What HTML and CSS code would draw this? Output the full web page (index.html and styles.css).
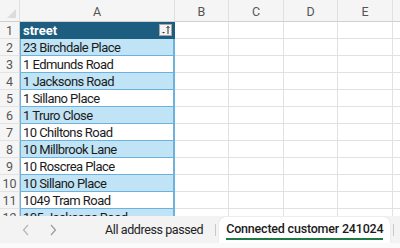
FILE: index.html
```html
<!DOCTYPE html>
<html lang="en">
<head>
    <meta charset="UTF-8">
    <title>street</title>
    <link rel="stylesheet" href="styles.css">
</head>
<body>
    <div class="sheet">
        <div class="grid">
            <div class="hd corner"><span class="tri"></span></div>
            <div class="hd">A</div>
            <div class="hd">B</div>
            <div class="hd">C</div>
            <div class="hd">D</div>
            <div class="hd">E</div>
            <div class="hd last"></div>

            <div class="rn">1</div>
            <div class="cell title">street
                <span class="filter">
                    <svg width="11" height="10" viewBox="0 0 11 10">
                        <path d="M2 7 L5 7 L3.5 8.6 Z" fill="#333"/>
                        <path d="M8 9 V1.5 M6.5 3 L8 1.3 L9.5 3" stroke="#333" stroke-width="1" fill="none"/>
                    </svg>
                </span>
            </div>
            <div class="cell"></div><div class="cell"></div><div class="cell"></div><div class="cell"></div><div class="cell last"></div>

            <div class="rn">2</div><div class="cell band">23 Birchdale Place</div>
            <div class="cell"></div><div class="cell"></div><div class="cell"></div><div class="cell"></div><div class="cell last"></div>
            <div class="rn">3</div><div class="cell plain">1 Edmunds Road</div>
            <div class="cell"></div><div class="cell"></div><div class="cell"></div><div class="cell"></div><div class="cell last"></div>
            <div class="rn">4</div><div class="cell band">1 Jacksons Road</div>
            <div class="cell"></div><div class="cell"></div><div class="cell"></div><div class="cell"></div><div class="cell last"></div>
            <div class="rn">5</div><div class="cell plain">1 Sillano Place</div>
            <div class="cell"></div><div class="cell"></div><div class="cell"></div><div class="cell"></div><div class="cell last"></div>
            <div class="rn">6</div><div class="cell band">1 Truro Close</div>
            <div class="cell"></div><div class="cell"></div><div class="cell"></div><div class="cell"></div><div class="cell last"></div>
            <div class="rn">7</div><div class="cell plain">10 Chiltons Road</div>
            <div class="cell"></div><div class="cell"></div><div class="cell"></div><div class="cell"></div><div class="cell last"></div>
            <div class="rn">8</div><div class="cell band">10 Millbrook Lane</div>
            <div class="cell"></div><div class="cell"></div><div class="cell"></div><div class="cell"></div><div class="cell last"></div>
            <div class="rn">9</div><div class="cell plain">10 Roscrea Place</div>
            <div class="cell"></div><div class="cell"></div><div class="cell"></div><div class="cell"></div><div class="cell last"></div>
            <div class="rn">10</div><div class="cell band">10 Sillano Place</div>
            <div class="cell"></div><div class="cell"></div><div class="cell"></div><div class="cell"></div><div class="cell last"></div>
            <div class="rn">11</div><div class="cell plain">1049 Tram Road</div>
            <div class="cell"></div><div class="cell"></div><div class="cell"></div><div class="cell"></div><div class="cell last"></div>
            <div class="rn">12</div><div class="cell band">105 Jacksons Road</div>
            <div class="cell"></div><div class="cell"></div><div class="cell"></div><div class="cell"></div><div class="cell last"></div>
        </div>
    </div>

    <div class="tabs">
        <div class="nav">
            <svg width="10" height="12" viewBox="0 0 10 12"><path d="M7 1 L2.5 6 L7 11" stroke="#b5b5b5" stroke-width="1.2" fill="none"/></svg>
            <svg width="10" height="12" viewBox="0 0 10 12"><path d="M3 1 L7.5 6 L3 11" stroke="#9a9a9a" stroke-width="1.2" fill="none"/></svg>
        </div>
        <div class="tab">All address passed</div>
        <div class="sep"></div>
        <div class="tab active"><span>Connected customer 241024</span></div>
        <div class="sep"></div>
    </div>
</body>
</html>
```

FILE: styles.css
```css
* { box-sizing: border-box; }
body {
    margin: 0;
    width: 400px;
    height: 248px;
    overflow: hidden;
    background: #fff;
    font-family: Roboto, "Noto Sans", sans-serif;
}
.sheet {
    height: 216px;
    overflow: hidden;
}
.grid {
    display: grid;
    grid-template-columns: 20px 155px 54px 55px 54px 55px 7px;
    grid-template-rows: 22px;
    grid-auto-rows: 17px;
}
.hd {
    background: #f5f5f5;
    border-right: 1px solid #e0e0e0;
    border-bottom: 1px solid #cfcfcf;
    color: #555;
    font-size: 12.5px;
    display: flex;
    align-items: center;
    justify-content: center;
    padding-top: 2px;
}
.hd.last { border-right: none; }
.corner { position: relative; }
.tri {
    position: absolute;
    right: 3px;
    bottom: 3px;
    width: 0;
    height: 0;
    border-left: 9px solid transparent;
    border-bottom: 9px solid #dcdcdc;
}
.rn {
    background: #f5f5f5;
    border-right: 1px solid #cfcfcf;
    border-bottom: 1px solid #e3e3e3;
    color: #555;
    font-size: 12.5px;
    display: flex;
    align-items: center;
    justify-content: center;
}
.cell {
    border-right: 1px solid #e1e1e1;
    border-bottom: 1px solid #e1e1e1;
    font-size: 13px;
    letter-spacing: -0.55px;
    color: #1b1b1b;
    padding-left: 3px;
    line-height: 17px;
    white-space: nowrap;
}
.cell.last { border-right: none; }
.title {
    position: relative;
    background: #1d5d80;
    color: #fff;
    font-weight: bold;
    letter-spacing: 0;
    border-right: 1px solid #1d5d80;
    border-bottom: 1px solid #1d5d80;
}
.filter {
    position: absolute;
    right: 2px;
    top: 2px;
    width: 13px;
    height: 12px;
    background: #f4f4f4;
    border: 1px solid #a9a9a9;
    display: flex;
    align-items: center;
    justify-content: center;
}
.band {
    background: #c0e4f5;
    border-right: 2px solid #6bb3de;
    border-bottom: 1px solid #6bb3de;
    border-left: 1px solid #6bb3de;
    padding-left: 2px;
}
.plain {
    background: #fff;
    border-right: 2px solid #6bb3de;
    border-bottom: 1px solid #6bb3de;
    border-left: 1px solid #6bb3de;
    padding-left: 2px;
}
.tabs {
    height: 32px;
    background: #f3f3f3;
    display: flex;
    align-items: stretch;
    border-bottom: 5px solid #fafafa;
    white-space: nowrap;
    overflow: hidden;
}
.nav {
    width: 92px;
    flex: none;
    display: flex;
    align-items: center;
    gap: 17px;
    padding-left: 21px;
}
.tab {
    font-size: 12.5px;
    letter-spacing: -0.4px;
    color: #222;
    display: flex;
    align-items: center;
    padding: 0 12px 0 13px;
}
.sep {
    width: 1px;
    flex: none;
    background: #c8c8c8;
    margin: 8px 0 7px;
}
.tab.active {
    background: #fff;
    border-radius: 6px 6px 0 0;
    margin: 1px 3px 0;
    padding: 0 7px;
    font-size: 12.5px;
    font-weight: 500;
    letter-spacing: -0.2px;
    color: #1b1b1b;
    box-shadow: 0 0 1px rgba(0,0,0,0.25);
}
.tab.active span {
    border-bottom: 2px solid #1e7a45;
    line-height: 18px;
}
```
